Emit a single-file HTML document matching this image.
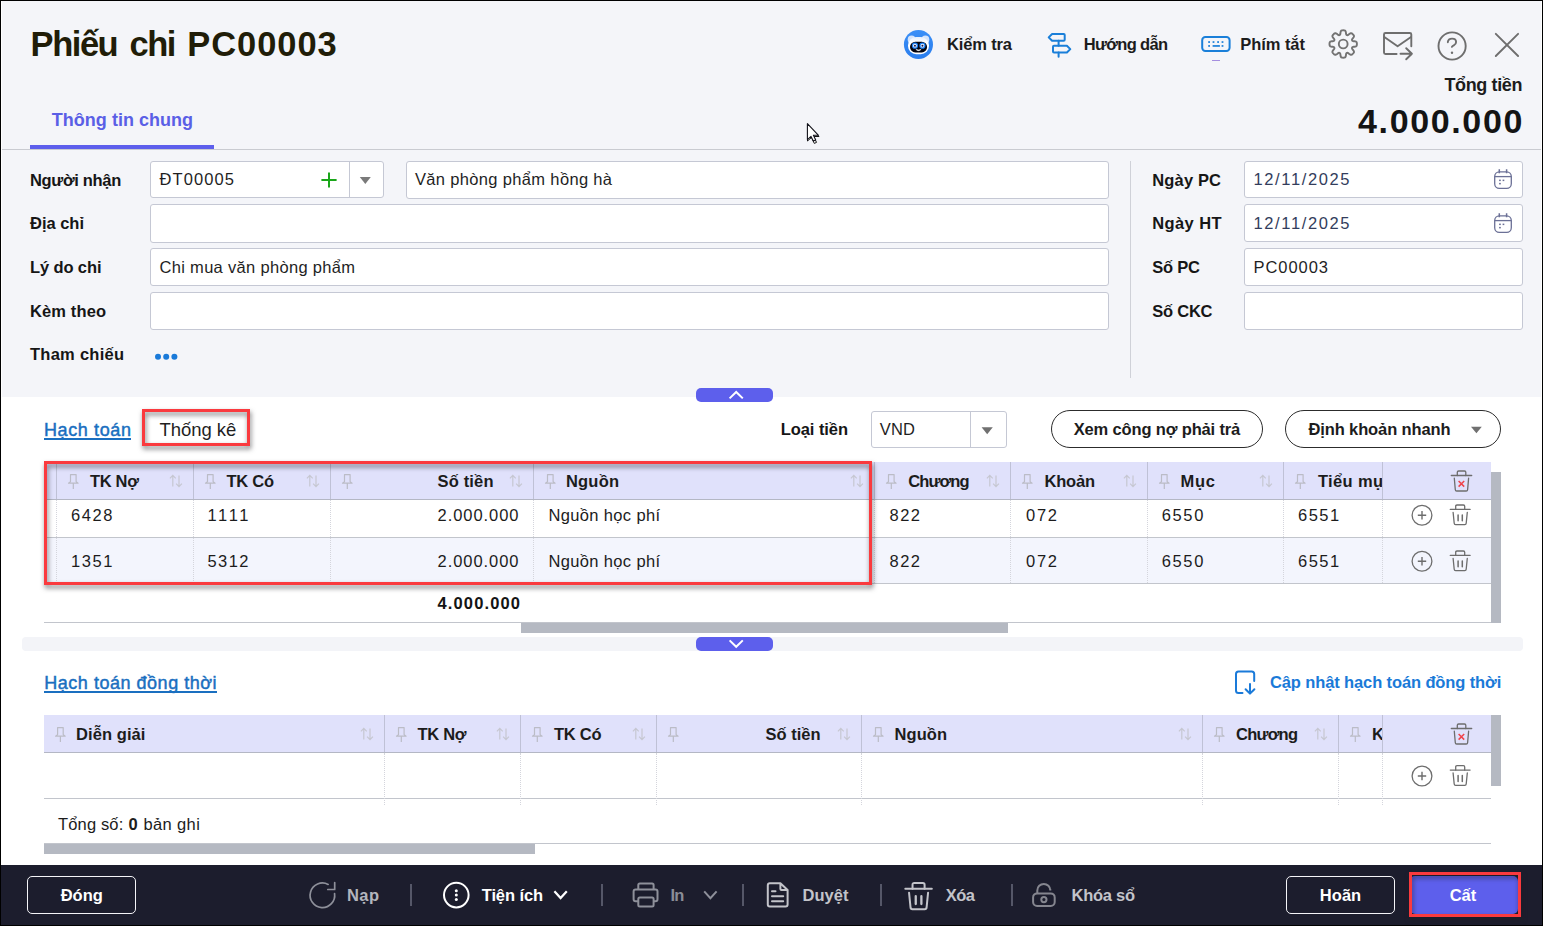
<!DOCTYPE html>
<html lang="vi">
<head>
<meta charset="utf-8">
<title>Phiếu chi PC00003</title>
<style>
*{box-sizing:border-box;margin:0;padding:0}
html,body{width:1543px;height:926px;overflow:hidden;background:#fff}
body{font-family:"Liberation Sans",sans-serif;position:relative;color:#1c1c1c}
.abs,.t,.box,.ln{position:absolute}
.t{white-space:pre;display:block}
#top{left:0;top:0;width:1543px;height:397px;background:#f4f5f9}
.inp{position:absolute;background:#fff;border:1px solid #c5c8d4;border-radius:3px;height:37px}
.pill{position:absolute;height:38px;border:1px solid #2c2c2c;border-radius:19px;background:#fff}
.th{position:absolute;background:#e0e1fb;height:37px}
.vs{position:absolute;width:1px;background:#bfc1d6}
.vd{position:absolute;width:0;border-left:1px dotted #d4d5dc}
.hl{position:absolute;height:1px;background:#c2c5cc}
.sb{position:absolute;background:#b5b9c2}
#foot{left:0;top:865px;width:1543px;height:61px;background:#1c1d2d}
.fbtn{position:absolute;top:876px;height:38px;border:1px solid #f4f4f8;border-radius:5px}
.fsep{position:absolute;top:884px;width:2px;height:22px;background:#555768}
.red{position:absolute;border:3px solid #fa3a3e;filter:drop-shadow(1px 3px 2.5px rgba(30,30,34,.6))}
svg{position:absolute;left:0;top:0;overflow:visible}

</style>
</head>
<body>
<div id="top" class="abs"></div>
<!-- header -->
<span class="t" style="left:30.60px;top:27px;font-size:34.5px;line-height:34.5px;font-weight:700;color:#211d08;letter-spacing:-1.46px;">Phiếu</span><span class="t" style="left:129.60px;top:27px;font-size:34.5px;line-height:34.5px;font-weight:700;color:#211d08;letter-spacing:-1.58px;">chi</span><span class="t" style="left:187.20px;top:27px;font-size:34.5px;line-height:34.5px;font-weight:700;color:#211d08;letter-spacing:0.95px;">PC00003</span>
<span class="t" style="left:947.00px;top:36px;font-size:16.5px;line-height:16.5px;font-weight:700;color:#1c1c1c;letter-spacing:-0.15px;">Kiểm tra</span><span class="t" style="left:1083.75px;top:36px;font-size:16.5px;line-height:16.5px;font-weight:700;color:#1c1c1c;letter-spacing:-0.68px;">Hướng dẫn</span><span class="t" style="left:1240.30px;top:36px;font-size:16.5px;line-height:16.5px;font-weight:700;color:#1c1c1c;letter-spacing:-0.06px;">Phím tắt</span>
<span class="t" style="left:1444.40px;top:76px;font-size:18px;line-height:18px;font-weight:700;color:#1c1c1c;letter-spacing:-0.37px;">Tổng tiền</span><span class="t" style="left:1358.00px;top:104px;font-size:34px;line-height:34px;font-weight:700;color:#141414;letter-spacing:1.64px;">4.000.000</span>
<!-- tab -->
<span class="t" style="left:51.80px;top:111px;font-size:18px;line-height:18px;font-weight:700;color:#5a5fe6;letter-spacing:0.02px;">Thông tin chung</span>
<div class="abs" style="left:0;top:149px;width:1543px;height:1px;background:#c9cbd1"></div>
<div class="abs" style="left:30px;top:145px;width:184px;height:4px;background:#5d5fec"></div>
<!-- form left -->
<span class="t" style="left:30.00px;top:172px;font-size:16.5px;line-height:16.5px;font-weight:700;color:#161616;letter-spacing:-0.33px;">Người nhận</span><span class="t" style="left:30.00px;top:215px;font-size:16.5px;line-height:16.5px;font-weight:700;color:#161616;letter-spacing:-0.02px;">Địa chỉ</span><span class="t" style="left:30.00px;top:259px;font-size:16.5px;line-height:16.5px;font-weight:700;color:#161616;letter-spacing:-0.12px;">Lý do chi</span><span class="t" style="left:30.00px;top:303px;font-size:16.5px;line-height:16.5px;font-weight:700;color:#161616;letter-spacing:0.12px;">Kèm theo</span><span class="t" style="left:30.00px;top:346px;font-size:16.5px;line-height:16.5px;font-weight:700;color:#161616;letter-spacing:0.26px;">Tham chiếu</span>
<div class="inp" style="left:150px;top:161px;width:234px"><div class="abs" style="left:197.5px;top:0;width:1px;height:35px;background:#c5c8d4"></div></div>
<div class="inp" style="left:406px;top:161px;width:703px;height:38px"></div>
<div class="inp" style="left:150px;top:204px;width:959px;height:39px"></div>
<div class="inp" style="left:150px;top:248px;width:959px;height:38px"></div>
<div class="inp" style="left:150px;top:292px;width:959px;height:38px"></div>
<span class="t" style="left:159.40px;top:171px;font-size:16.5px;line-height:16.5px;font-weight:400;color:#1f1f1f;letter-spacing:1.12px;">ĐT00005</span><span class="t" style="left:415.00px;top:171px;font-size:16.5px;line-height:16.5px;font-weight:400;color:#1f1f1f;letter-spacing:0.34px;">Văn phòng phẩm hồng hà</span><span class="t" style="left:159.50px;top:259px;font-size:16.5px;line-height:16.5px;font-weight:400;color:#1f1f1f;letter-spacing:0.31px;">Chi mua văn phòng phẩm</span>
<div class="abs" style="left:1130px;top:161px;width:1px;height:217px;background:#cfd1d8"></div>
<!-- form right -->
<span class="t" style="left:1152.30px;top:172px;font-size:16.5px;line-height:16.5px;font-weight:700;color:#161616;letter-spacing:0.14px;">Ngày PC</span><span class="t" style="left:1152.30px;top:215px;font-size:16.5px;line-height:16.5px;font-weight:700;color:#161616;letter-spacing:0.38px;">Ngày HT</span><span class="t" style="left:1152.30px;top:259px;font-size:16.5px;line-height:16.5px;font-weight:700;color:#161616;letter-spacing:-0.27px;">Số PC</span><span class="t" style="left:1152.30px;top:303px;font-size:16.5px;line-height:16.5px;font-weight:700;color:#161616;letter-spacing:-0.24px;">Số CKC</span>
<div class="inp" style="left:1244px;top:161px;width:279px"></div>
<div class="inp" style="left:1244px;top:204px;width:279px;height:38px"></div>
<div class="inp" style="left:1244px;top:248px;width:279px;height:38px"></div>
<div class="inp" style="left:1244px;top:292px;width:279px;height:38px"></div>
<span class="t" style="left:1253.50px;top:171px;font-size:16.5px;line-height:16.5px;font-weight:400;color:#333d5c;letter-spacing:1.63px;">12/11/2025</span><span class="t" style="left:1253.50px;top:215px;font-size:16.5px;line-height:16.5px;font-weight:400;color:#333d5c;letter-spacing:1.63px;">12/11/2025</span><span class="t" style="left:1253.50px;top:259px;font-size:16.5px;line-height:16.5px;font-weight:400;color:#1f1f1f;letter-spacing:0.95px;">PC00003</span>
<!-- collapse pills -->
<div class="abs" style="left:696px;top:388px;width:77px;height:14px;border-radius:5px;background:#5d5fec"></div>
<div class="abs" style="left:22px;top:637px;width:1501px;height:14px;border-radius:4px;background:#f3f4f8"></div>
<div class="abs" style="left:696px;top:637px;width:77px;height:14px;border-radius:5px;background:#5d5fec"></div>
<!-- toolbar 1 -->
<span class="t" style="left:44.00px;top:421px;font-size:18px;line-height:18px;font-weight:400;color:#1a6fc0;letter-spacing:0.62px;-webkit-text-stroke:0.45px #1a6fc0;">Hạch toán</span>
<div class="abs" style="left:44px;top:438px;width:87px;height:2px;background:#1a6fc0"></div>
<span class="t" style="left:159.40px;top:421px;font-size:18.5px;line-height:18.5px;font-weight:400;color:#1f1f1f;letter-spacing:-0.02px;">Thống kê</span>
<span class="t" style="left:780.70px;top:421px;font-size:16.5px;line-height:16.5px;font-weight:700;color:#161616;letter-spacing:-0.06px;">Loại tiền</span>
<div class="inp" style="left:871px;top:411px;width:136px"><div class="abs" style="left:98px;top:0;width:1px;height:35px;background:#c5c8d4"></div></div>
<span class="t" style="left:879.80px;top:421px;font-size:16.5px;line-height:16.5px;font-weight:400;color:#1f1f1f;letter-spacing:0.18px;">VND</span>
<div class="pill" style="left:1051px;top:410px;width:212px"></div>
<div class="pill" style="left:1285px;top:410px;width:216px"></div>
<span class="t" style="left:1073.70px;top:421px;font-size:16.5px;line-height:16.5px;font-weight:700;color:#1c1c1c;letter-spacing:-0.15px;">Xem công nợ phải trả</span><span class="t" style="left:1308.40px;top:421px;font-size:16.5px;line-height:16.5px;font-weight:700;color:#1c1c1c;letter-spacing:-0.11px;">Định khoản nhanh</span>
<!-- table 1 -->
<div class="th" style="left:44px;top:462px;width:1447px"></div>
<div class="abs" style="left:44px;top:538px;width:1447px;height:45px;background:#f3f5fd"></div>
<div class="hl" style="left:44px;top:499px;width:1447px;background:#b4b7c4"></div>
<div class="hl" style="left:44px;top:537px;width:1447px"></div>
<div class="hl" style="left:44px;top:583px;width:1447px"></div>
<div class="hl" style="left:44px;top:622px;width:1447px"></div>
<div class="vs" style="left:56px;top:462px;height:37px"></div><div class="vd" style="left:56px;top:500px;height:83px"></div><div class="vs" style="left:193px;top:462px;height:37px"></div><div class="vd" style="left:193px;top:500px;height:83px"></div><div class="vs" style="left:330px;top:462px;height:37px"></div><div class="vd" style="left:330px;top:500px;height:83px"></div><div class="vs" style="left:533px;top:462px;height:37px"></div><div class="vd" style="left:533px;top:500px;height:83px"></div><div class="vs" style="left:874px;top:462px;height:37px"></div><div class="vd" style="left:874px;top:500px;height:83px"></div><div class="vs" style="left:1010px;top:462px;height:37px"></div><div class="vd" style="left:1010px;top:500px;height:83px"></div><div class="vs" style="left:1147px;top:462px;height:37px"></div><div class="vd" style="left:1147px;top:500px;height:83px"></div><div class="vs" style="left:1283px;top:462px;height:37px"></div><div class="vd" style="left:1283px;top:500px;height:83px"></div><div class="vs" style="left:1382px;top:462px;height:37px"></div><div class="vd" style="left:1382px;top:500px;height:83px"></div>
<div class="sb" style="left:1491px;top:472px;width:10px;height:151px"></div>
<div class="sb" style="left:521px;top:623px;width:487px;height:10px"></div>
<span class="t" style="left:90.00px;top:473px;font-size:16.5px;line-height:16.5px;font-weight:700;color:#1c1c1c;letter-spacing:-0.33px;">TK Nợ</span><span class="t" style="left:226.50px;top:473px;font-size:16.5px;line-height:16.5px;font-weight:700;color:#1c1c1c;letter-spacing:-0.27px;">TK Có</span><span class="t" style="left:437.50px;top:473px;font-size:16.5px;line-height:16.5px;font-weight:700;color:#1c1c1c;letter-spacing:0.16px;">Số tiền</span><span class="t" style="left:566.00px;top:473px;font-size:16.5px;line-height:16.5px;font-weight:700;color:#1c1c1c;letter-spacing:0.19px;">Nguồn</span><span class="t" style="left:908.30px;top:473px;font-size:16.5px;line-height:16.5px;font-weight:700;color:#1c1c1c;letter-spacing:-0.93px;">Chương</span><span class="t" style="left:1044.40px;top:473px;font-size:16.5px;line-height:16.5px;font-weight:700;color:#1c1c1c;letter-spacing:-0.14px;">Khoản</span><span class="t" style="left:1180.60px;top:473px;font-size:16.5px;line-height:16.5px;font-weight:700;color:#1c1c1c;letter-spacing:0.70px;">Mục</span>
<div class="abs" style="left:1283px;top:462px;width:99px;height:37px;overflow:hidden"><div class="abs" style="left:-1283px;top:-462px"><span class="t" style="left:1318.00px;top:473px;font-size:16.5px;line-height:16.5px;font-weight:700;color:#1c1c1c;letter-spacing:0.34px;">Tiểu mục</span></div></div>
<span class="t" style="left:71.00px;top:507px;font-size:16.5px;line-height:16.5px;font-weight:400;color:#1c1c1c;letter-spacing:1.56px;">6428</span><span class="t" style="left:207.50px;top:507px;font-size:16.5px;line-height:16.5px;font-weight:400;color:#1c1c1c;letter-spacing:2.65px;">1111</span><span class="t" style="left:437.50px;top:507px;font-size:16.5px;line-height:16.5px;font-weight:400;color:#1c1c1c;letter-spacing:0.95px;">2.000.000</span><span class="t" style="left:548.50px;top:507px;font-size:16.5px;line-height:16.5px;font-weight:400;color:#1c1c1c;letter-spacing:0.35px;">Nguồn học phí</span><span class="t" style="left:889.50px;top:507px;font-size:16.5px;line-height:16.5px;font-weight:400;color:#1c1c1c;letter-spacing:1.48px;">822</span><span class="t" style="left:1026.00px;top:507px;font-size:16.5px;line-height:16.5px;font-weight:400;color:#1c1c1c;letter-spacing:1.73px;">072</span><span class="t" style="left:1161.70px;top:507px;font-size:16.5px;line-height:16.5px;font-weight:400;color:#1c1c1c;letter-spacing:1.66px;">6550</span><span class="t" style="left:1298.00px;top:507px;font-size:16.5px;line-height:16.5px;font-weight:400;color:#1c1c1c;letter-spacing:1.49px;">6551</span>
<span class="t" style="left:71.00px;top:553px;font-size:16.5px;line-height:16.5px;font-weight:400;color:#1c1c1c;letter-spacing:1.56px;">1351</span><span class="t" style="left:207.50px;top:553px;font-size:16.5px;line-height:16.5px;font-weight:400;color:#1c1c1c;letter-spacing:1.43px;">5312</span><span class="t" style="left:437.50px;top:553px;font-size:16.5px;line-height:16.5px;font-weight:400;color:#1c1c1c;letter-spacing:0.95px;">2.000.000</span><span class="t" style="left:548.50px;top:553px;font-size:16.5px;line-height:16.5px;font-weight:400;color:#1c1c1c;letter-spacing:0.35px;">Nguồn học phí</span><span class="t" style="left:889.50px;top:553px;font-size:16.5px;line-height:16.5px;font-weight:400;color:#1c1c1c;letter-spacing:1.48px;">822</span><span class="t" style="left:1026.00px;top:553px;font-size:16.5px;line-height:16.5px;font-weight:400;color:#1c1c1c;letter-spacing:1.73px;">072</span><span class="t" style="left:1161.70px;top:553px;font-size:16.5px;line-height:16.5px;font-weight:400;color:#1c1c1c;letter-spacing:1.66px;">6550</span><span class="t" style="left:1298.00px;top:553px;font-size:16.5px;line-height:16.5px;font-weight:400;color:#1c1c1c;letter-spacing:1.49px;">6551</span>
<span class="t" style="left:437.50px;top:595px;font-size:16.5px;line-height:16.5px;font-weight:700;color:#141414;letter-spacing:1.14px;">4.000.000</span>
<!-- section 2 -->
<span class="t" style="left:44.30px;top:674px;font-size:18px;line-height:18px;font-weight:400;color:#1a6fc0;letter-spacing:0.52px;-webkit-text-stroke:0.45px #1a6fc0;">Hạch toán đồng thời</span>
<div class="abs" style="left:44px;top:691px;width:173px;height:2px;background:#1a6fc0"></div>
<span class="t" style="left:1270.00px;top:674px;font-size:16.5px;line-height:16.5px;font-weight:700;color:#1a7ad8;letter-spacing:-0.12px;">Cập nhật hạch toán đồng thời</span>
<div class="th" style="left:44px;top:715px;width:1447px"></div>
<div class="hl" style="left:44px;top:752px;width:1447px;background:#b4b7c4"></div>
<div class="hl" style="left:44px;top:798px;width:1447px"></div>
<div class="hl" style="left:44px;top:843px;width:1447px"></div>
<div class="vs" style="left:384px;top:715px;height:37px"></div><div class="vd" style="left:384px;top:753px;height:52px"></div><div class="vs" style="left:520px;top:715px;height:37px"></div><div class="vd" style="left:520px;top:753px;height:52px"></div><div class="vs" style="left:656px;top:715px;height:37px"></div><div class="vd" style="left:656px;top:753px;height:52px"></div><div class="vs" style="left:861px;top:715px;height:37px"></div><div class="vd" style="left:861px;top:753px;height:52px"></div><div class="vs" style="left:1202px;top:715px;height:37px"></div><div class="vd" style="left:1202px;top:753px;height:52px"></div><div class="vs" style="left:1338px;top:715px;height:37px"></div><div class="vd" style="left:1338px;top:753px;height:52px"></div><div class="vs" style="left:1382px;top:715px;height:37px"></div><div class="vd" style="left:1382px;top:753px;height:52px"></div>
<div class="sb" style="left:1491px;top:715px;width:10px;height:71px"></div>
<div class="sb" style="left:44px;top:844px;width:491px;height:10px"></div>
<span class="t" style="left:76.10px;top:726px;font-size:16.5px;line-height:16.5px;font-weight:700;color:#1c1c1c;letter-spacing:0.07px;">Diễn giải</span><span class="t" style="left:417.50px;top:726px;font-size:16.5px;line-height:16.5px;font-weight:700;color:#1c1c1c;letter-spacing:-0.31px;">TK Nợ</span><span class="t" style="left:554.00px;top:726px;font-size:16.5px;line-height:16.5px;font-weight:700;color:#1c1c1c;letter-spacing:-0.27px;">TK Có</span><span class="t" style="left:765.50px;top:726px;font-size:16.5px;line-height:16.5px;font-weight:700;color:#1c1c1c;letter-spacing:0.00px;">Số tiền</span><span class="t" style="left:894.50px;top:726px;font-size:16.5px;line-height:16.5px;font-weight:700;color:#1c1c1c;letter-spacing:0.07px;">Nguồn</span><span class="t" style="left:1236.00px;top:726px;font-size:16.5px;line-height:16.5px;font-weight:700;color:#1c1c1c;letter-spacing:-0.77px;">Chương</span>
<div class="abs" style="left:1339px;top:715px;width:43px;height:37px;overflow:hidden"><div class="abs" style="left:-1339px;top:-715px"><span class="t" style="left:1372.00px;top:726px;font-size:16.5px;line-height:16.5px;font-weight:700;color:#1c1c1c;letter-spacing:-0.09px;">Khoản</span></div></div>
<span class="t" style="left:58.00px;top:816px;font-size:16.5px;line-height:16.5px;font-weight:400;color:#1c1c1c;letter-spacing:0.15px;">Tổng số:</span><span class="t" style="left:128.50px;top:816px;font-size:16.5px;line-height:16.5px;font-weight:700;color:#1c1c1c;letter-spacing:0.00px;">0</span><span class="t" style="left:143.50px;top:816px;font-size:16.5px;line-height:16.5px;font-weight:400;color:#1c1c1c;letter-spacing:0.36px;">bản ghi</span>
<!-- footer -->
<div id="foot" class="abs"></div>
<div class="fbtn" style="left:27px;width:109px"></div>
<div class="fbtn" style="left:1286px;width:109px"></div>
<div class="abs" style="left:1410px;top:876px;width:108px;height:38px;border-radius:5px;background:#5d5fec"></div>
<div class="fsep" style="left:410px"></div><div class="fsep" style="left:601px"></div><div class="fsep" style="left:742px"></div><div class="fsep" style="left:880px"></div><div class="fsep" style="left:1011px"></div>
<span class="t" style="left:60.70px;top:887px;font-size:16.5px;line-height:16.5px;font-weight:700;color:#ffffff;letter-spacing:-0.02px;">Đóng</span><span class="t" style="left:347.00px;top:887px;font-size:16.5px;line-height:16.5px;font-weight:700;color:#b3b5bd;letter-spacing:0.41px;">Nạp</span><span class="t" style="left:481.70px;top:887px;font-size:16.5px;line-height:16.5px;font-weight:700;color:#ffffff;letter-spacing:-0.09px;">Tiện ích</span><span class="t" style="left:670.40px;top:887px;font-size:16.5px;line-height:16.5px;font-weight:700;color:#8b8d97;letter-spacing:-0.67px;">In</span><span class="t" style="left:802.60px;top:887px;font-size:16.5px;line-height:16.5px;font-weight:700;color:#c3c4ca;letter-spacing:0.01px;">Duyệt</span><span class="t" style="left:945.70px;top:887px;font-size:16.5px;line-height:16.5px;font-weight:700;color:#c3c4ca;letter-spacing:-0.48px;">Xóa</span><span class="t" style="left:1071.50px;top:887px;font-size:16.5px;line-height:16.5px;font-weight:700;color:#c3c4ca;letter-spacing:-0.27px;">Khóa sổ</span><span class="t" style="left:1319.80px;top:887px;font-size:16.5px;line-height:16.5px;font-weight:700;color:#ffffff;letter-spacing:0.05px;">Hoãn</span><span class="t" style="left:1449.70px;top:887px;font-size:16.5px;line-height:16.5px;font-weight:700;color:#ffffff;letter-spacing:0.00px;">Cất</span>
<!-- icons -->
<svg width="1543" height="926" viewBox="0 0 1543 926"><defs><linearGradient id="pg" x1="0" y1="0" x2="0" y2="1"><stop offset="0" stop-color="#3a8ff7"/><stop offset="1" stop-color="#2a7ded"/></linearGradient><linearGradient id="ph" x1="0" y1="0" x2="0" y2="1"><stop offset="0" stop-color="#e3eefd"/><stop offset=".3" stop-color="#fff"/><stop offset="1" stop-color="#fff"/></linearGradient></defs><circle cx="918.45" cy="44.45" r="14.55" fill="url(#pg)"/><circle cx="911.6" cy="39.4" r="3.9" fill="#d3e4fc"/><circle cx="925.4" cy="39.4" r="3.9" fill="#d3e4fc"/><rect x="908" y="37" width="21" height="17.2" rx="8.2" fill="url(#ph)"/><rect x="910" y="41.7" width="17.1" height="10.7" rx="5.3" fill="#05050f"/><circle cx="914.95" cy="45.7" r="3.1" fill="#1a7ff5"/><circle cx="914.95" cy="45.7" r="1.9" fill="#eef4ff"/><circle cx="914.95" cy="45.8" r="1" fill="#15154a"/><circle cx="922.45" cy="45.7" r="3.1" fill="#1a7ff5"/><circle cx="922.45" cy="45.7" r="1.9" fill="#eef4ff"/><circle cx="922.45" cy="45.8" r="1" fill="#15154a"/><path d="M915.900 49.500q2.600 2.400 5.200 0q-2.600 .9-5.200 0z" fill="#fff" stroke="#fff" stroke-width=".5"/><g fill="none" stroke="#1a7fd9" stroke-width="2" stroke-linejoin="round" stroke-linecap="round"><path d="M1048.7 37.4l3.4-3.4h11.6q1 0 1 1v4.8q0 1-1 1h-11.6z"/><path d="M1058.6 40.8v4.9M1058.6 52.4v4.4"/><path d="M1070.3 49.1l-3.4-3.4h-12.9q-1 0-1 1v4.8q0 1 1 1h12.9z"/></g><rect x="1202.2" y="37" width="27.4" height="14" rx="3.2" fill="none" stroke="#1a7fd9" stroke-width="2"/><rect x="1208.2" y="41.2" width="1.8" height="1.7" fill="#1a7fd9"/><rect x="1212.6" y="41.2" width="1.8" height="1.7" fill="#1a7fd9"/><rect x="1217.2" y="41.2" width="1.8" height="1.7" fill="#1a7fd9"/><rect x="1221.6" y="41.2" width="1.8" height="1.7" fill="#1a7fd9"/><rect x="1208.2" y="45.1" width="1.8" height="1.7" fill="#1a7fd9"/><rect x="1212.6" y="45.1" width="7.3" height="1.7" fill="#1a7fd9"/><rect x="1221.6" y="45.1" width="1.8" height="1.7" fill="#1a7fd9"/><rect x="1212" y="60" width="8" height="1" fill="#a58fe0"/><path d="M1343.20 30.30L1343.56 30.31L1343.92 30.33L1344.27 30.38L1344.62 30.45L1344.97 30.58L1345.29 30.82L1345.57 31.22L1345.78 31.86L1345.92 32.69L1346.01 33.50L1346.12 34.13L1346.27 34.56L1346.45 34.83L1346.65 35.01L1346.87 35.13L1347.12 35.20L1347.39 35.22L1347.71 35.15L1348.11 34.95L1348.64 34.59L1349.28 34.08L1349.96 33.59L1350.56 33.29L1351.05 33.20L1351.44 33.26L1351.77 33.41L1352.08 33.61L1352.36 33.83L1352.63 34.06L1352.89 34.31L1353.14 34.57L1353.37 34.84L1353.59 35.12L1353.79 35.43L1353.94 35.76L1354.00 36.15L1353.91 36.64L1353.61 37.24L1353.12 37.92L1352.61 38.56L1352.25 39.09L1352.05 39.49L1351.98 39.81L1352.00 40.08L1352.07 40.33L1352.19 40.55L1352.37 40.75L1352.64 40.93L1353.07 41.08L1353.70 41.19L1354.51 41.28L1355.34 41.42L1355.98 41.63L1356.38 41.91L1356.62 42.23L1356.75 42.58L1356.82 42.93L1356.87 43.28L1356.89 43.64L1356.90 44.00L1356.89 44.36L1356.87 44.72L1356.82 45.07L1356.75 45.42L1356.62 45.77L1356.38 46.09L1355.98 46.37L1355.34 46.58L1354.51 46.72L1353.70 46.81L1353.07 46.92L1352.64 47.07L1352.37 47.25L1352.19 47.45L1352.07 47.67L1352.00 47.92L1351.98 48.19L1352.05 48.51L1352.25 48.91L1352.61 49.44L1353.12 50.08L1353.61 50.76L1353.91 51.36L1354.00 51.85L1353.94 52.24L1353.79 52.57L1353.59 52.88L1353.37 53.16L1353.14 53.43L1352.89 53.69L1352.63 53.94L1352.36 54.17L1352.08 54.39L1351.77 54.59L1351.44 54.74L1351.05 54.80L1350.56 54.71L1349.96 54.41L1349.28 53.92L1348.64 53.41L1348.11 53.05L1347.71 52.85L1347.39 52.78L1347.12 52.80L1346.87 52.87L1346.65 52.99L1346.45 53.17L1346.27 53.44L1346.12 53.87L1346.01 54.50L1345.92 55.31L1345.78 56.14L1345.57 56.78L1345.29 57.18L1344.97 57.42L1344.62 57.55L1344.27 57.62L1343.92 57.67L1343.56 57.69L1343.20 57.70L1342.84 57.69L1342.48 57.67L1342.13 57.62L1341.78 57.55L1341.43 57.42L1341.11 57.18L1340.83 56.78L1340.62 56.14L1340.48 55.31L1340.39 54.50L1340.28 53.87L1340.13 53.44L1339.95 53.17L1339.75 52.99L1339.53 52.87L1339.28 52.80L1339.01 52.78L1338.69 52.85L1338.29 53.05L1337.76 53.41L1337.12 53.92L1336.44 54.41L1335.84 54.71L1335.35 54.80L1334.96 54.74L1334.63 54.59L1334.32 54.39L1334.04 54.17L1333.77 53.94L1333.51 53.69L1333.26 53.43L1333.03 53.16L1332.81 52.88L1332.61 52.57L1332.46 52.24L1332.40 51.85L1332.49 51.36L1332.79 50.76L1333.28 50.08L1333.79 49.44L1334.15 48.91L1334.35 48.51L1334.42 48.19L1334.40 47.92L1334.33 47.67L1334.21 47.45L1334.03 47.25L1333.76 47.07L1333.33 46.92L1332.70 46.81L1331.89 46.72L1331.06 46.58L1330.42 46.37L1330.02 46.09L1329.78 45.77L1329.65 45.42L1329.58 45.07L1329.53 44.72L1329.51 44.36L1329.50 44.00L1329.51 43.64L1329.53 43.28L1329.58 42.93L1329.65 42.58L1329.78 42.23L1330.02 41.91L1330.42 41.63L1331.06 41.42L1331.89 41.28L1332.70 41.19L1333.33 41.08L1333.76 40.93L1334.03 40.75L1334.21 40.55L1334.33 40.33L1334.40 40.08L1334.42 39.81L1334.35 39.49L1334.15 39.09L1333.79 38.56L1333.28 37.92L1332.79 37.24L1332.49 36.64L1332.40 36.15L1332.46 35.76L1332.61 35.43L1332.81 35.12L1333.03 34.84L1333.26 34.57L1333.51 34.31L1333.77 34.06L1334.04 33.83L1334.32 33.61L1334.63 33.41L1334.96 33.26L1335.35 33.20L1335.84 33.29L1336.44 33.59L1337.12 34.08L1337.76 34.59L1338.29 34.95L1338.69 35.15L1339.01 35.22L1339.28 35.20L1339.53 35.13L1339.75 35.01L1339.95 34.83L1340.13 34.56L1340.28 34.13L1340.39 33.50L1340.48 32.69L1340.62 31.86L1340.83 31.22L1341.11 30.82L1341.43 30.58L1341.78 30.45L1342.13 30.38L1342.48 30.33L1342.84 30.31Z" fill="none" stroke="#737373" stroke-width="1.9" stroke-linejoin="round"/><circle cx="1343.2" cy="44.0" r="4.4" fill="none" stroke="#737373" stroke-width="1.9"/><g fill="none" stroke="#6e6e6e" stroke-width="1.9" stroke-linecap="round" stroke-linejoin="round"><path d="M1396.6 54h-11.1q-1.5 0-1.5-1.5v-18q0-1.5 1.5-1.5h24.3q1.5 0 1.5 1.5v11.7"/><path d="M1384.3 37l13.3 9.3l13.4-9.3"/><path d="M1400.5 53.7h11.2M1406.2 48.2l5.7 5.5l-5.7 5.6"/></g><circle cx="1452.1" cy="46" r="13.6" fill="none" stroke="#6e6e6e" stroke-width="1.9"/><path d="M1447.8 42.2q.4-3.6 4.3-3.6q4 0 4 3.4q0 2.2-2.3 3.4q-1.6.8-1.9 1.4" fill="none" stroke="#6e6e6e" stroke-width="1.9" stroke-linecap="round"/><circle cx="1452" cy="52.8" r="1.2" fill="#6e6e6e"/><path d="M1495.8 33.8l22.3 22.2M1518.1 33.8l-22.3 22.2" stroke="#6e6e6e" stroke-width="1.9" fill="none" stroke-linecap="round"/><path d="M807.5 124.5v16.5l4-3.6l2.8 6l2.2-1l-2.8-5.9h5.3z" fill="#fff" stroke="#111" stroke-width="1" stroke-linejoin="round"/><path d="M807.4 123.600L807.4 139.600L811 136.400L813.300 141.100L815.700 140L813.400 135.300L818.500 135.300Z" fill="#fff" stroke="#14141c" stroke-width="1.100" stroke-linejoin="round"/><path d="M321.4 180h15.2M329 172.4v15.2" stroke="#1aa61a" stroke-width="2" fill="none"/><path d="M359.8 176.9h11.0l-5.5 7.0z" fill="#7a7a7a"/><circle cx="158.0" cy="356.7" r="3" fill="#1a7ad9"/><circle cx="166.2" cy="356.7" r="3" fill="#1a7ad9"/><circle cx="174.4" cy="356.7" r="3" fill="#1a7ad9"/><g fill="none" stroke="#6b7096" stroke-width="1.3"><rect x="1494.7" y="171.8" width="16.6" height="16.6" rx="4.6"/><path d="M1494.7 176.6h16.6"/><path d="M1499.3 169.2v4M1506.6 169.2v4" stroke-width="1.5"/></g><g fill="#6b7096"><rect x="1499.1" y="179.6" width="1.7" height="1.5"/><rect x="1502.6" y="179.6" width="1.7" height="1.5"/><rect x="1499.1" y="182.9" width="1.7" height="1.5"/></g><g fill="none" stroke="#6b7096" stroke-width="1.3"><rect x="1494.7" y="215.8" width="16.6" height="16.6" rx="4.6"/><path d="M1494.7 220.6h16.6"/><path d="M1499.3 213.2v4M1506.6 213.2v4" stroke-width="1.5"/></g><g fill="#6b7096"><rect x="1499.1" y="223.6" width="1.7" height="1.5"/><rect x="1502.6" y="223.6" width="1.7" height="1.5"/><rect x="1499.1" y="226.9" width="1.7" height="1.5"/></g><path d="M729.6 398.4l6.6-6.4l6.6 6.4" fill="none" stroke="#fff" stroke-width="2"/><path d="M729.6 640.4l6.6 6.4l6.6-6.4" fill="none" stroke="#fff" stroke-width="2"/><path d="M981.6 427.2h11.2l-5.6 7.0z" fill="#707070"/><path d="M1471.0 426.7h10.8l-5.4 6.6z" fill="#707070"/><path d="M70.5 474.6h5.6v7l2 1.6h-9.6l2-1.6zM73.3 483.2v5.8" fill="none" stroke="#bbbcc6" stroke-width="1.2" stroke-linejoin="round"/><path d="M172.8 486.6v-11.2m-2.9 2.9l2.9-2.9l2.9 2.9M179.0 475.4v11.2m-2.9-2.9l2.9 2.9l2.9-2.9" fill="none" stroke="#c6c7d1" stroke-width="1.2"/><path d="M207.5 474.6h5.6v7l2 1.6h-9.6l2-1.6zM210.3 483.2v5.8" fill="none" stroke="#bbbcc6" stroke-width="1.2" stroke-linejoin="round"/><path d="M309.8 486.6v-11.2m-2.9 2.9l2.9-2.9l2.9 2.9M316.0 475.4v11.2m-2.9-2.9l2.9 2.9l2.9-2.9" fill="none" stroke="#c6c7d1" stroke-width="1.2"/><path d="M344.5 474.6h5.6v7l2 1.6h-9.6l2-1.6zM347.3 483.2v5.8" fill="none" stroke="#bbbcc6" stroke-width="1.2" stroke-linejoin="round"/><path d="M512.8 486.6v-11.2m-2.9 2.9l2.9-2.9l2.9 2.9M519.0 475.4v11.2m-2.9-2.9l2.9 2.9l2.9-2.9" fill="none" stroke="#c6c7d1" stroke-width="1.2"/><path d="M547.5 474.6h5.6v7l2 1.6h-9.6l2-1.6zM550.3 483.2v5.8" fill="none" stroke="#bbbcc6" stroke-width="1.2" stroke-linejoin="round"/><path d="M853.8 486.6v-11.2m-2.9 2.9l2.9-2.9l2.9 2.9M860.0 475.4v11.2m-2.9-2.9l2.9 2.9l2.9-2.9" fill="none" stroke="#c6c7d1" stroke-width="1.2"/><path d="M888.5 474.6h5.6v7l2 1.6h-9.6l2-1.6zM891.3 483.2v5.8" fill="none" stroke="#bbbcc6" stroke-width="1.2" stroke-linejoin="round"/><path d="M989.8 486.6v-11.2m-2.9 2.9l2.9-2.9l2.9 2.9M996.0 475.4v11.2m-2.9-2.9l2.9 2.9l2.9-2.9" fill="none" stroke="#c6c7d1" stroke-width="1.2"/><path d="M1024.5 474.6h5.6v7l2 1.6h-9.6l2-1.6zM1027.3 483.2v5.8" fill="none" stroke="#bbbcc6" stroke-width="1.2" stroke-linejoin="round"/><path d="M1126.8 486.6v-11.2m-2.9 2.9l2.9-2.9l2.9 2.9M1133.0 475.4v11.2m-2.9-2.9l2.9 2.9l2.9-2.9" fill="none" stroke="#c6c7d1" stroke-width="1.2"/><path d="M1161.5 474.6h5.6v7l2 1.6h-9.6l2-1.6zM1164.3 483.2v5.8" fill="none" stroke="#bbbcc6" stroke-width="1.2" stroke-linejoin="round"/><path d="M1262.8 486.6v-11.2m-2.9 2.9l2.9-2.9l2.9 2.9M1269.0 475.4v11.2m-2.9-2.9l2.9 2.9l2.9-2.9" fill="none" stroke="#c6c7d1" stroke-width="1.2"/><path d="M1297.5 474.6h5.6v7l2 1.6h-9.6l2-1.6zM1300.3 483.2v5.8" fill="none" stroke="#bbbcc6" stroke-width="1.2" stroke-linejoin="round"/><g fill="none" stroke="#6d6d6d" stroke-width="1.3" stroke-linecap="round" stroke-linejoin="round"><path d="M1451.3 475.5h20.4"/><path d="M1457.3 475.5v-3.2q0-1.3 1.3-1.3h5.9q1.3 0 1.3 1.3v3.2"/><path d="M1454.3 478.2l1 11.5q.1 1.3 1.4 1.3h9.5q1.3 0 1.4-1.3l1-11.5"/></g><path d="M1458.6 481.0l5.6 5.6m0-5.6l-5.6 5.6" stroke="#f0434a" stroke-width="1.5" fill="none"/><circle cx="1422.0" cy="515.3" r="9.9" fill="none" stroke="#6d6d6d" stroke-width="1.3"/><path d="M1417.8 515.3h8.4M1422.0 511.1v8.4" stroke="#6d6d6d" stroke-width="1.4" fill="none"/><g transform="translate(1450.3 505.0) scale(1.000)" fill="none" stroke="#6d6d6d" stroke-width="1.30" stroke-linecap="round" stroke-linejoin="round"><path d="M0 4.4h19.8"/><path d="M5.4 4.4v-3.1q0-1.3 1.3-1.3h6.4q1.3 0 1.3 1.3v3.1"/><path d="M2.8 7.3l1.1 11q.1 1.3 1.4 1.3h9.2q1.3 0 1.4-1.3l1.1-11"/><path d="M7.8 9.9v5.9M12 9.9v5.9" stroke-width="1.50"/></g><circle cx="1422.0" cy="561.3" r="9.9" fill="none" stroke="#6d6d6d" stroke-width="1.3"/><path d="M1417.8 561.3h8.4M1422.0 557.1v8.4" stroke="#6d6d6d" stroke-width="1.4" fill="none"/><g transform="translate(1450.3 551.0) scale(1.000)" fill="none" stroke="#6d6d6d" stroke-width="1.30" stroke-linecap="round" stroke-linejoin="round"><path d="M0 4.4h19.8"/><path d="M5.4 4.4v-3.1q0-1.3 1.3-1.3h6.4q1.3 0 1.3 1.3v3.1"/><path d="M2.8 7.3l1.1 11q.1 1.3 1.4 1.3h9.2q1.3 0 1.4-1.3l1.1-11"/><path d="M7.8 9.9v5.9M12 9.9v5.9" stroke-width="1.50"/></g><path d="M57.6 727.6h5.6v7l2 1.6h-9.6l2-1.6zM60.4 736.2v5.8" fill="none" stroke="#bbbcc6" stroke-width="1.2" stroke-linejoin="round"/><path d="M363.8 739.6v-11.2m-2.9 2.9l2.9-2.9l2.9 2.9M370.0 728.4v11.2m-2.9-2.9l2.9 2.9l2.9-2.9" fill="none" stroke="#c6c7d1" stroke-width="1.2"/><path d="M398.5 727.6h5.6v7l2 1.6h-9.6l2-1.6zM401.3 736.2v5.8" fill="none" stroke="#bbbcc6" stroke-width="1.2" stroke-linejoin="round"/><path d="M499.8 739.6v-11.2m-2.9 2.9l2.9-2.9l2.9 2.9M506.0 728.4v11.2m-2.9-2.9l2.9 2.9l2.9-2.9" fill="none" stroke="#c6c7d1" stroke-width="1.2"/><path d="M534.5 727.6h5.6v7l2 1.6h-9.6l2-1.6zM537.3 736.2v5.8" fill="none" stroke="#bbbcc6" stroke-width="1.2" stroke-linejoin="round"/><path d="M635.8 739.6v-11.2m-2.9 2.9l2.9-2.9l2.9 2.9M642.0 728.4v11.2m-2.9-2.9l2.9 2.9l2.9-2.9" fill="none" stroke="#c6c7d1" stroke-width="1.2"/><path d="M670.5 727.6h5.6v7l2 1.6h-9.6l2-1.6zM673.3 736.2v5.8" fill="none" stroke="#bbbcc6" stroke-width="1.2" stroke-linejoin="round"/><path d="M840.8 739.6v-11.2m-2.9 2.9l2.9-2.9l2.9 2.9M847.0 728.4v11.2m-2.9-2.9l2.9 2.9l2.9-2.9" fill="none" stroke="#c6c7d1" stroke-width="1.2"/><path d="M875.5 727.6h5.6v7l2 1.6h-9.6l2-1.6zM878.3 736.2v5.8" fill="none" stroke="#bbbcc6" stroke-width="1.2" stroke-linejoin="round"/><path d="M1181.8 739.6v-11.2m-2.9 2.9l2.9-2.9l2.9 2.9M1188.0 728.4v11.2m-2.9-2.9l2.9 2.9l2.9-2.9" fill="none" stroke="#c6c7d1" stroke-width="1.2"/><path d="M1216.5 727.6h5.6v7l2 1.6h-9.6l2-1.6zM1219.3 736.2v5.8" fill="none" stroke="#bbbcc6" stroke-width="1.2" stroke-linejoin="round"/><path d="M1317.8 739.6v-11.2m-2.9 2.9l2.9-2.9l2.9 2.9M1324.0 728.4v11.2m-2.9-2.9l2.9 2.9l2.9-2.9" fill="none" stroke="#c6c7d1" stroke-width="1.2"/><path d="M1352.5 727.6h5.6v7l2 1.6h-9.6l2-1.6zM1355.3 736.2v5.8" fill="none" stroke="#bbbcc6" stroke-width="1.2" stroke-linejoin="round"/><g fill="none" stroke="#6d6d6d" stroke-width="1.3" stroke-linecap="round" stroke-linejoin="round"><path d="M1451.3 728.5h20.4"/><path d="M1457.3 728.5v-3.2q0-1.3 1.3-1.3h5.9q1.3 0 1.3 1.3v3.2"/><path d="M1454.3 731.2l1 11.5q.1 1.3 1.4 1.3h9.5q1.3 0 1.4-1.3l1-11.5"/></g><path d="M1458.6 734.0l5.6 5.6m0-5.6l-5.6 5.6" stroke="#f0434a" stroke-width="1.5" fill="none"/><circle cx="1422.0" cy="776.0" r="9.9" fill="none" stroke="#6d6d6d" stroke-width="1.3"/><path d="M1417.8 776.0h8.4M1422.0 771.8v8.4" stroke="#6d6d6d" stroke-width="1.4" fill="none"/><g transform="translate(1450.3 765.7) scale(1.000)" fill="none" stroke="#6d6d6d" stroke-width="1.30" stroke-linecap="round" stroke-linejoin="round"><path d="M0 4.4h19.8"/><path d="M5.4 4.4v-3.1q0-1.3 1.3-1.3h6.4q1.3 0 1.3 1.3v3.1"/><path d="M2.8 7.3l1.1 11q.1 1.3 1.4 1.3h9.2q1.3 0 1.4-1.3l1.1-11"/><path d="M7.8 9.9v5.9M12 9.9v5.9" stroke-width="1.50"/></g><g fill="none" stroke="#1a7ad9" stroke-width="2" stroke-linecap="round" stroke-linejoin="round"><path d="M1242.5 693h-4q-2.5 0-2.5-2.500v-16.5q0-2.500 2.500-2.500h13.200q2.500 0 2.500 2.500v7"/><path d="M1250 684v9.300M1245.600 689.200l4.400 4.400l4.400-4.400"/></g><path d="M334.58 893.59A12.3 12.3 0 1 1 328.17 884.44" fill="none" stroke="#8e909a" stroke-width="1.7" stroke-linecap="round"/><path d="M334.7 882.6v6.9h-6.9" fill="none" stroke="#8e909a" stroke-width="1.7" stroke-linecap="round" stroke-linejoin="round"/><circle cx="456.3" cy="895.1" r="12.3" fill="none" stroke="#fff" stroke-width="2"/><circle cx="456.3" cy="890.7" r="1.5" fill="#fff"/><circle cx="456.3" cy="895.1" r="1.5" fill="#fff"/><circle cx="456.3" cy="899.6" r="1.5" fill="#fff"/><path d="M554.4 891.2l6.2 6.8l6.2 -6.8" fill="none" stroke="#fff" stroke-width="2.2"/><g fill="none" stroke="#8e909a" stroke-width="2" stroke-linejoin="round"><path d="M638.300 889.500v-4.500q0-1.500 1.500-1.500h12.300q1.500 0 1.500 1.500v4.500"/><rect x="633.6" y="889.5" width="23.9" height="11.700" rx="2"/><rect x="638.3" y="897.5" width="15.300" height="9" rx="1.500" fill="#1c1d2d"/></g><path d="M704.2 891.4l6.2 6.8l6.2 -6.8" fill="none" stroke="#8e909a" stroke-width="2"/><g fill="none" stroke="#c3c4ca" stroke-width="2" stroke-linejoin="round" stroke-linecap="round"><path d="M780.400 883.300h-10.600q-2 0-2 2v19.300q0 2 2 2h15.800q2 0 2-2v-14.500zv5.800q0 1 1 1h5.800"/><path d="M772 891.200h3.500M772 896.300h11.200M772 901.200h11.200"/></g><g transform="translate(905.3 882.9) scale(1.340)" fill="none" stroke="#c3c4ca" stroke-width="1.49" stroke-linecap="round" stroke-linejoin="round"><path d="M0 4.4h19.8"/><path d="M5.4 4.4v-3.1q0-1.3 1.3-1.3h6.4q1.3 0 1.3 1.3v3.1"/><path d="M2.8 7.3l1.1 11q.1 1.3 1.4 1.3h9.2q1.3 0 1.4-1.3l1.1-11"/><path d="M7.8 9.9v5.9M12 9.9v5.9" stroke-width="1.72"/></g><g fill="none" stroke="#85868f" stroke-width="2" stroke-linecap="round"><rect x="1033.1" y="893.4" width="21.6" height="12.5" rx="4"/><path d="M1037.3 893v-2.600a6.500 6.500 0 0 1 13 0v-.9"/><circle cx="1043.9" cy="899.6" r="2.6"/></g></svg>
<!-- annotation boxes -->
<div class="red" style="left:142px;top:409px;width:108px;height:37px"></div>
<div class="red" style="left:44px;top:461px;width:828px;height:124px"></div>
<div class="red" style="left:1409px;top:872px;width:112px;height:45px"></div>
<!-- window frame -->
<div class="abs" style="left:0;top:0;width:1543px;height:1px;background:#000"></div>
<div class="abs" style="left:0;top:0;width:1px;height:926px;background:#000"></div>
<div class="abs" style="left:1542px;top:0;width:1px;height:926px;background:#000"></div>
<div class="abs" style="left:0;top:925px;width:1543px;height:1px;background:#000"></div>
<div class="abs" style="left:1px;top:1px;width:1px;height:864px;background:#fff"></div>
<div class="abs" style="left:1541px;top:1px;width:1px;height:864px;background:#fff"></div>

</body>
</html>
